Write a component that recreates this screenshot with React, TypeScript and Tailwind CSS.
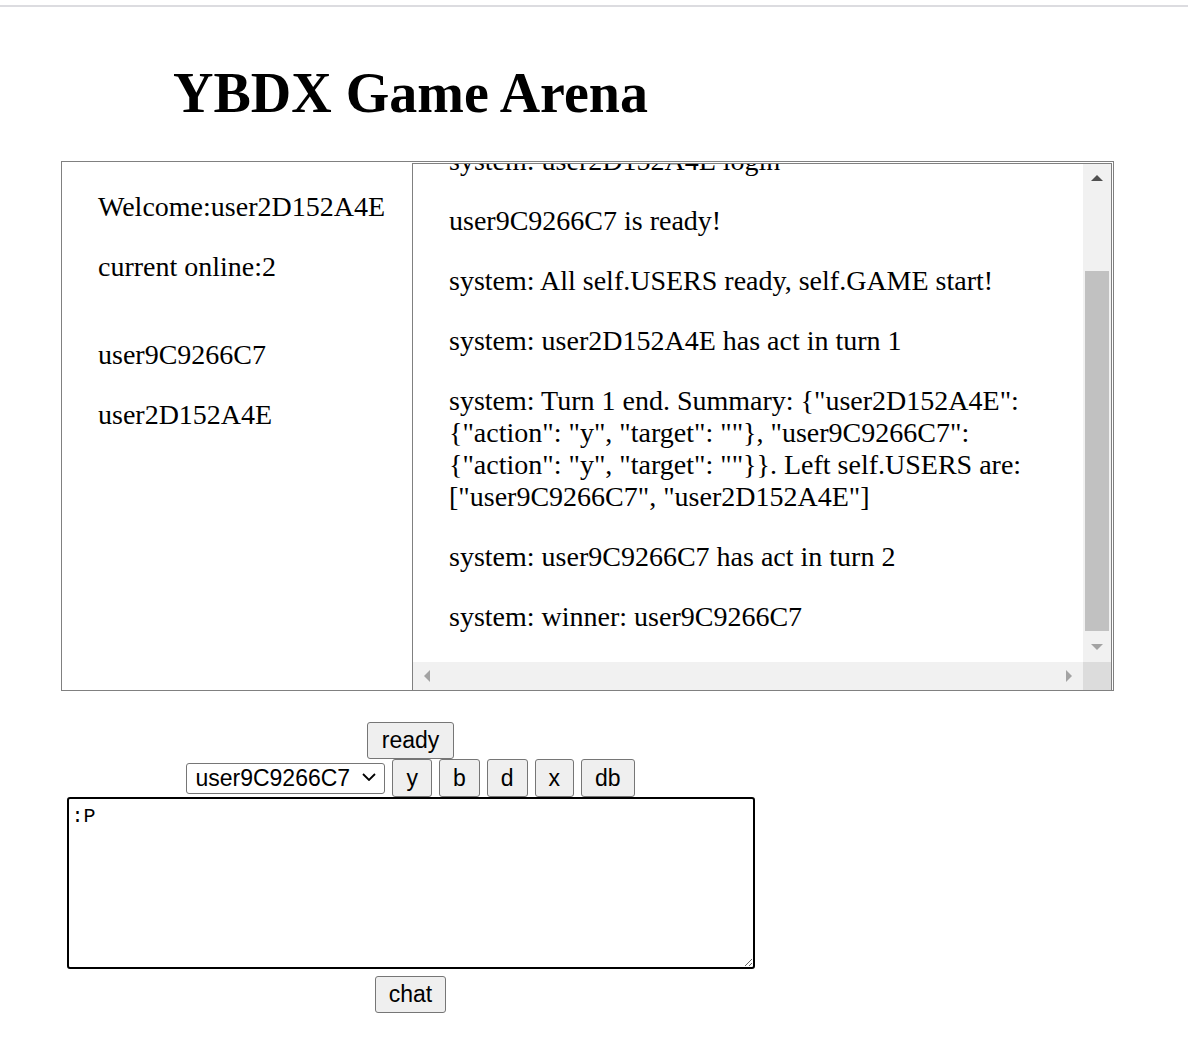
import React from "react";

const users = ["user9C9266C7", "user2D152A4E"];
const actions = ["y", "b", "d", "x", "db"];

function Tri({ dir, color }: { dir: "up" | "down" | "left" | "right"; color: string }) {
  const pts = {
    up: "6,0 12,6 0,6",
    down: "0,0 12,0 6,6",
    left: "0,6 6,0 6,12",
    right: "0,0 6,6 0,12",
  }[dir];
  const vertical = dir === "up" || dir === "down";
  return (
    <svg width={vertical ? 12 : 6} height={vertical ? 6 : 12} viewBox={vertical ? "0 0 12 6" : "0 0 6 12"}>
      <polygon points={pts} fill={color} />
    </svg>
  );
}

export default function App() {
  return (
    <div className="min-h-screen bg-white text-black font-['Liberation_Serif',serif]">
      <div className="mt-[5px] h-[2px] bg-[#dcdce0]" />
      <h1 className="w-[821px] mt-[54px] mb-[36px] text-center text-[56px] leading-[64px] font-bold">YBDX Game Arena</h1>

      <div className="ml-[61px] flex h-[530px] w-[1053px] border border-[#808080]">
        {/* players */}
        <div className="w-[350px] shrink-0 pl-[36px] pt-[29px] text-[28px] leading-[32px]">
          <p>Welcome:user2D152A4E</p>
          <p className="mt-[28px]">current online:2</p>
          <p className="mt-[56px]">{users[0]}</p>
          <p className="mt-[28px]">{users[1]}</p>
        </div>

        {/* game log */}
        <div className="mt-[1px] flex h-[527px] w-[700px] flex-col border-x border-t border-[#808080]">
          <div className="flex min-h-0 flex-1">
            <div className="flex-1 overflow-hidden pl-[36px]">
              <div className="-mt-[19px] flex flex-col gap-[28px] whitespace-nowrap text-[28px] leading-[32px]">
                <p>system: user2D152A4E login</p>
                <p>user9C9266C7 is ready!</p>
                <p>system: All self.USERS ready, self.GAME start!</p>
                <p>system: user2D152A4E has act in turn 1</p>
                <p>
                  system: Turn 1 end. Summary: {'{"user2D152A4E":'}
                  <br />
                  {'{"action": "y", "target": ""}, "user9C9266C7":'}
                  <br />
                  {'{"action": "y", "target": ""}}. Left self.USERS are:'}
                  <br />
                  {'["user9C9266C7", "user2D152A4E"]'}
                </p>
                <p>system: user9C9266C7 has act in turn 2</p>
                <p>system: winner: user9C9266C7</p>
              </div>
            </div>
            <div className="flex w-[28px] flex-col bg-[#f1f1f1]">
              <div className="flex h-[28px] items-center justify-center">
                <Tri dir="up" color="#505050" />
              </div>
              <div className="h-[79px]" />
              <div className="mx-[2px] h-[360px] bg-[#c1c1c1]" />
              <div className="flex flex-1 items-center justify-center">
                <Tri dir="down" color="#a3a3a3" />
              </div>
            </div>
          </div>
          <div className="flex h-[28px]">
            <div className="flex flex-1 items-center justify-between bg-[#f1f1f1] px-[11px]">
              <Tri dir="left" color="#a3a3a3" />
              <Tri dir="right" color="#a3a3a3" />
            </div>
            <div className="w-[28px] bg-[#dcdcdc]" />
          </div>
        </div>
      </div>

      {/* controls */}
      <div className="flex w-[821px] flex-col items-center font-['Liberation_Sans',Arial,sans-serif] text-[23px]">
        <button className="mt-[31px] h-[37px] rounded-[3px] border border-[#767676] bg-[#efefef] px-[14px] leading-none">ready</button>
        <div className="flex h-[38px] items-center gap-[7px]">
          <div className="relative">
            <select className="h-[31px] w-[199px] appearance-none rounded-[3px] border border-[#767676] bg-white pl-[8px] leading-none">
              {users.map((u) => (
                <option key={u}>{u}</option>
              ))}
            </select>
            <svg className="pointer-events-none absolute right-[9px] top-[12px]" width="14" height="8" viewBox="0 0 14 8">
              <polyline points="1,1 7,7 13,1" fill="none" stroke="#000" strokeWidth="1.8" />
            </svg>
          </div>
          {actions.map((a) => (
            <button key={a} className="h-[38px] rounded-[3px] border border-[#767676] bg-[#efefef] px-[13px] leading-none">
              {a}
            </button>
          ))}
        </div>
        <textarea
          defaultValue=":P"
          className="h-[172px] w-[688px] rounded-[3px] border-2 border-black px-[3px] pt-[3px] font-['Liberation_Mono',monospace] text-[20px] outline-none"
        />
        <button className="mt-[7px] h-[37px] rounded-[3px] border border-[#767676] bg-[#efefef] px-[13px] leading-none">chat</button>
      </div>
    </div>
  );
}
